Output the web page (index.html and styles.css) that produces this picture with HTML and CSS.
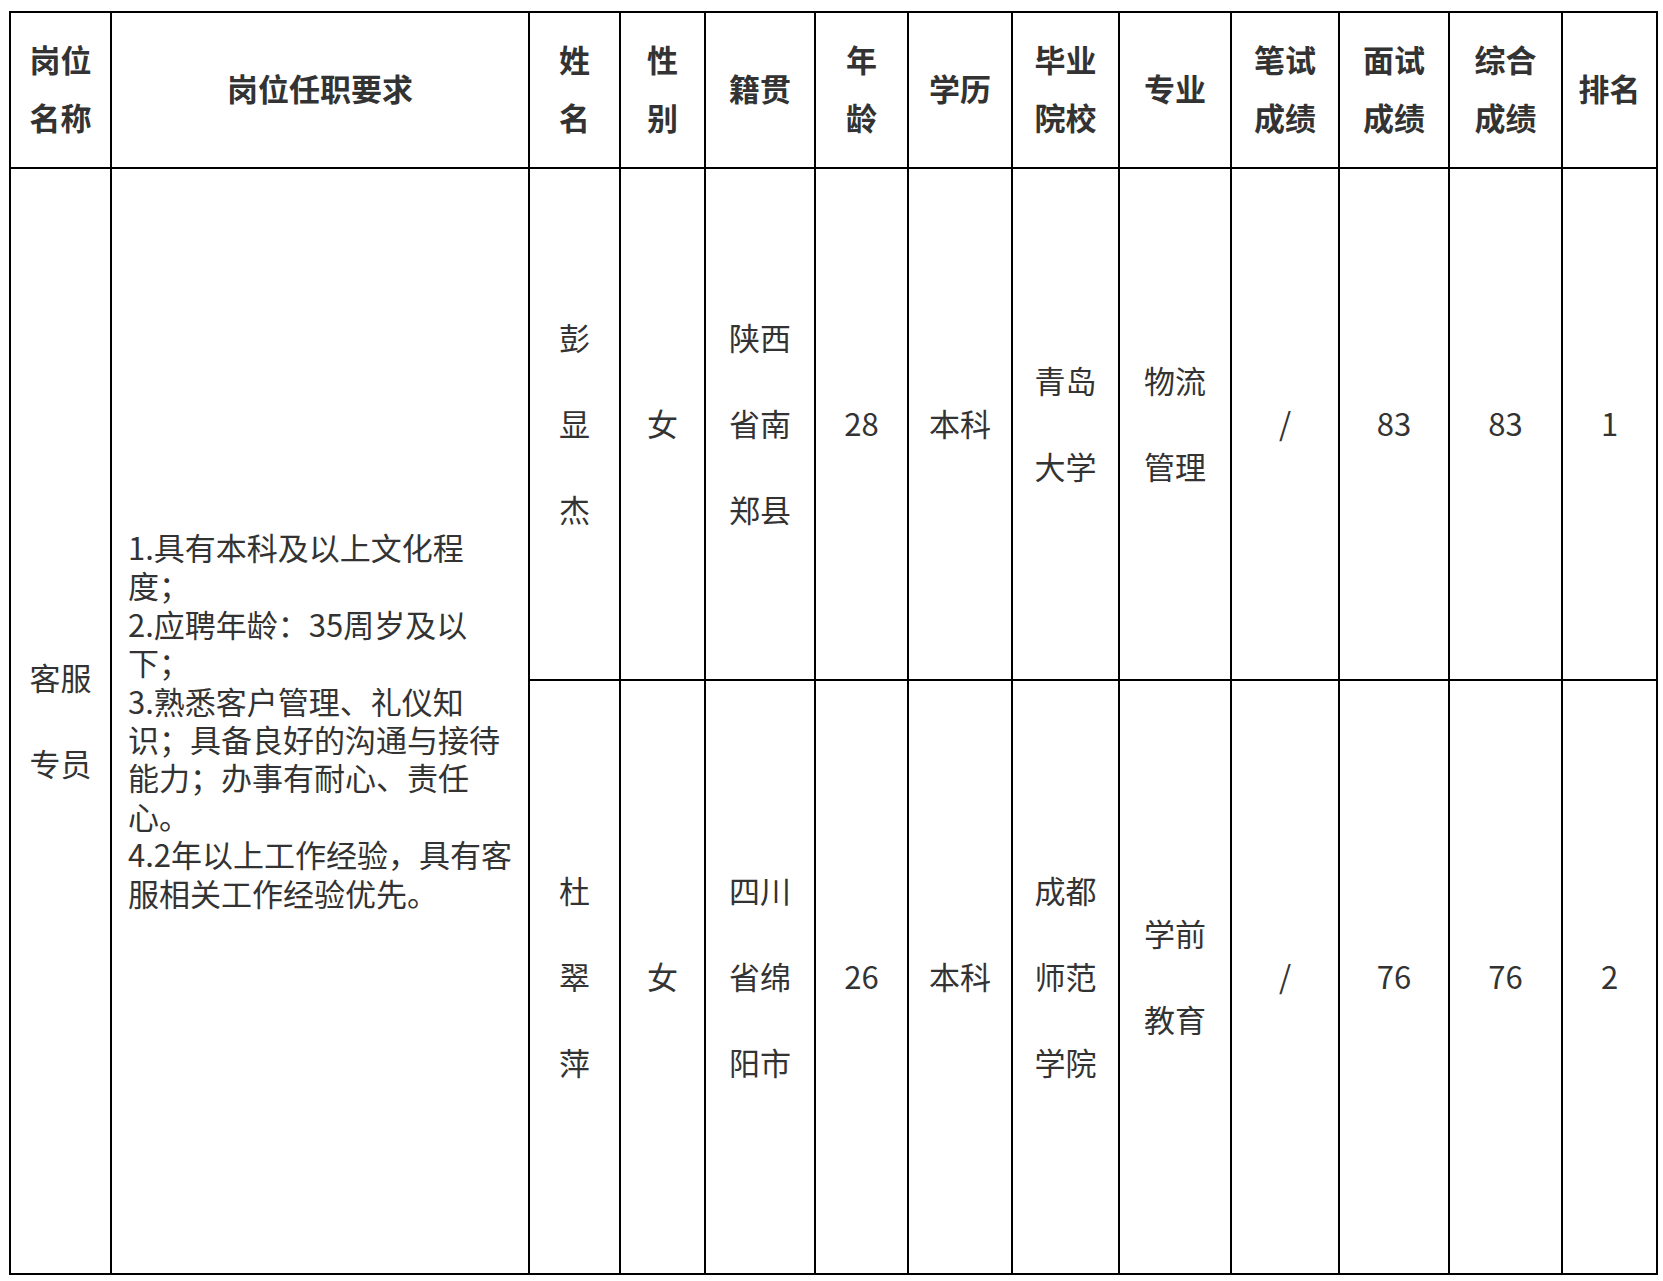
FILE: index.html
```html
<!DOCTYPE html>
<html lang="zh-CN">
<head>
<meta charset="utf-8">
<title>招聘结果</title>
<link rel="stylesheet" href="styles.css">
</head>
<body>
<div class="wrap">
<table class="result">
  <colgroup>
    <col style="width:101px">
    <col style="width:418px">
    <col style="width:91px">
    <col style="width:85px">
    <col style="width:110px">
    <col style="width:93px">
    <col style="width:104px">
    <col style="width:107px">
    <col style="width:112px">
    <col style="width:108px">
    <col style="width:110px">
    <col style="width:113px">
    <col style="width:95px">
  </colgroup>
  <thead>
    <tr class="head">
      <th>岗位名称</th>
      <th>岗位任职要求</th>
      <th>姓名</th>
      <th>性别</th>
      <th>籍贯</th>
      <th>年龄</th>
      <th>学历</th>
      <th>毕业院校</th>
      <th>专业</th>
      <th>笔试成绩</th>
      <th>面试成绩</th>
      <th>综合成绩</th>
      <th>排名</th>
    </tr>
  </thead>
  <tbody>
    <tr class="row1">
      <td rowspan="2">客服专员</td>
      <td rowspan="2" class="req">1.具有本科及以上文化程度；<br>2.应聘年龄：35周岁及以下；<br>3.熟悉客户管理、礼仪知识；具备良好的沟通与接待能力；办事有耐心、责任心。<br>4.2年以上工作经验，具有客服相关工作经验优先。</td>
      <td>彭显杰</td>
      <td>女</td>
      <td>陕西省南郑县</td>
      <td>28</td>
      <td>本科</td>
      <td>青岛大学</td>
      <td>物流管理</td>
      <td>/</td>
      <td>83</td>
      <td>83</td>
      <td>1</td>
    </tr>
    <tr class="row2">
      <td>杜翠萍</td>
      <td>女</td>
      <td>四川省绵阳市</td>
      <td>26</td>
      <td>本科</td>
      <td>成都师范学院</td>
      <td>学前教育</td>
      <td>/</td>
      <td>76</td>
      <td>76</td>
      <td>2</td>
    </tr>
  </tbody>
</table>
</div>
</body>
</html>
```

FILE: styles.css
```css
html, body {
  margin: 0;
  padding: 0;
  background: #ffffff;
}

.wrap {
  padding: 11px 0 0 9px;
}

.result {
  border-collapse: collapse;
  table-layout: fixed;
  width: 1649px;
  font-family: "Noto Sans CJK SC", "Noto Sans", sans-serif;
  font-size: 31px;
  color: #333333;
}

.result th,
.result td {
  border: 2px solid #000000;
  padding: 0 15px;
  text-align: center;
  vertical-align: middle;
  word-break: break-all;
}

.result th {
  font-weight: 700;
  line-height: 58px;
  padding-bottom: 4px;
}

.result td {
  font-weight: 400;
  line-height: 86px;
  padding-bottom: 3px;
}

.result td.req {
  text-align: left;
  line-height: 38.4px;
  padding: 0 6px 2px 16px;
  word-break: normal;
  line-break: strict;
}

.head {
  height: 156px;
}

.row1 {
  height: 512px;
}

.row2 {
  height: 594px;
}
```
